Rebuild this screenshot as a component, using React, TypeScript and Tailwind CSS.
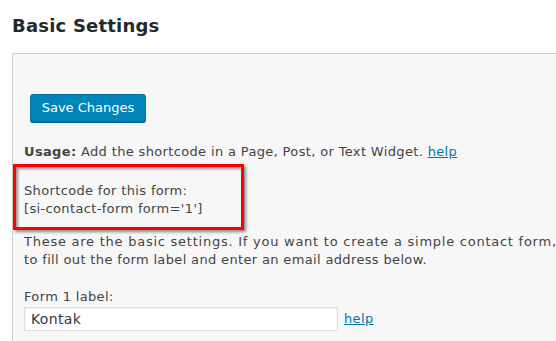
export default function App() {
  return (
    <div className="w-[556px] h-[341px] overflow-hidden bg-white font-['DejaVu_Sans',Verdana,sans-serif] text-[13px] text-[#444]">
      {/* Heading */}
      <h2 className="ml-3 pt-[14px] h-[53px] text-[18px] leading-[24px] font-bold text-[#23282d] tracking-[0.2px]">
        Basic Settings
      </h2>

      {/* Settings panel */}
      <div className="ml-3 w-[600px] h-[300px] border-t border-l border-[#ccc] bg-[#f7f7f7] pl-[11px] pt-[40px] tracking-[0.35px]">
        <button className="ml-[6px] h-[28px] w-[116px] rounded-[3px] border border-[#0073aa] bg-[#0085ba] text-[13px] text-white tracking-normal shadow-[0_1px_0_#006799]">
          Save Changes
        </button>

        <p className="mt-[21px] leading-[18px] whitespace-nowrap">
          <b>Usage:</b> Add the shortcode in a Page, Post, or Text Widget.{" "}
          <a href="#" className="text-[#0073aa] underline">help</a>
        </p>

        {/* Highlighted shortcode */}
        <div className="-ml-[11px] mt-[3px] w-[231px] h-[66px] border-[3px] border-[#ff0000] pl-[8px] pt-[15px] leading-[18px] whitespace-nowrap shadow-[2px_2px_3px_rgba(0,0,0,0.45),inset_2px_2px_3px_rgba(0,0,0,0.4)]">
          <div>Shortcode for this form:</div>
          <div>[si-contact-form form='1']</div>
        </div>

        <p className="mt-[3px] leading-[18px] whitespace-nowrap">
          <span className="tracking-[0.75px]">
            These are the basic settings. If you want to create a simple contact form,
          </span>
          <br />
          to fill out the form label and enter an email address below.
        </p>

        <label className="block mt-[19px] leading-[18px]">Form 1 label:</label>
        <div className="flex items-center gap-[6px] mt-[1px]">
          <input
            defaultValue="Kontak"
            className="h-[24px] w-[314px] border border-[#ddd] bg-white px-[6px] text-[14px] text-[#32373c] shadow-[inset_0_1px_2px_rgba(0,0,0,0.07)] outline-none"
          />
          <a href="#" className="text-[#0073aa] underline">help</a>
        </div>
      </div>
    </div>
  )
}
